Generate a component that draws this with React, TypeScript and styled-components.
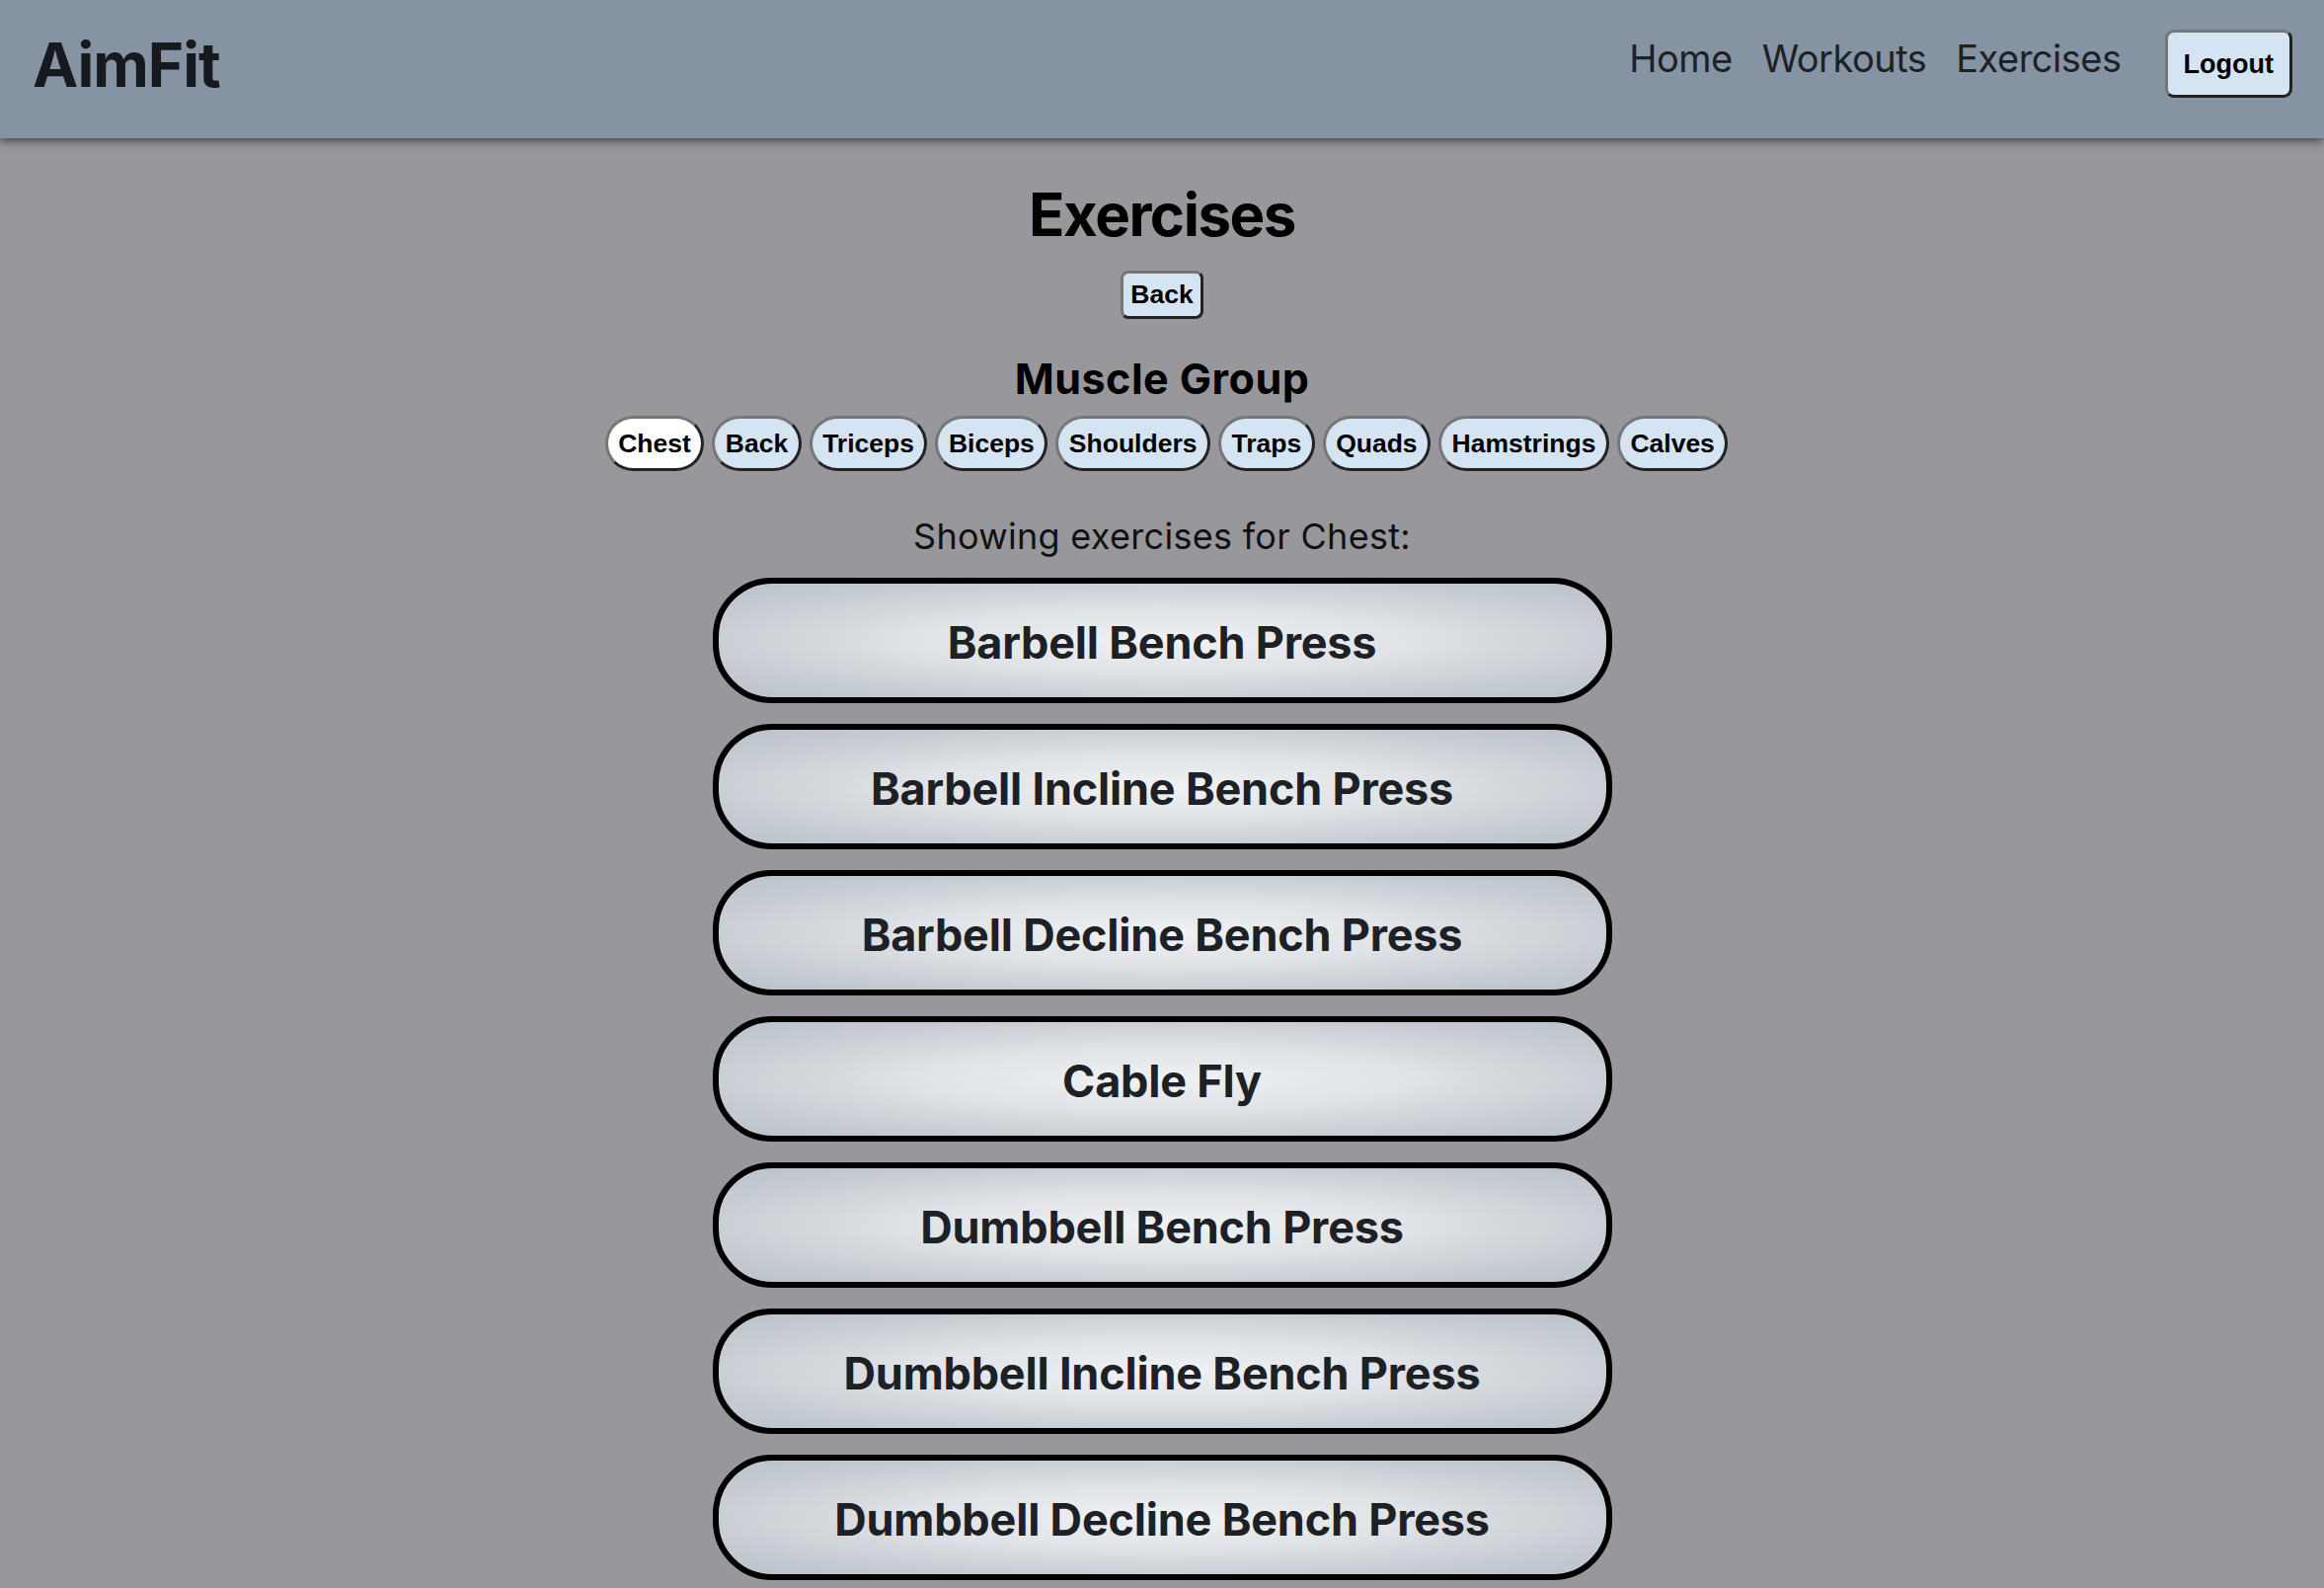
import React, { useState } from "react";
import styled, { createGlobalStyle } from "styled-components";

const GlobalStyle = createGlobalStyle`
  html, body {
    margin: 0;
    padding: 0;
    overflow: hidden;
  }
  body {
    background: #98979c;
    font-family: Inter, "Noto Sans", "Liberation Sans", sans-serif;
    color: #000;
  }
  * { box-sizing: border-box; }
`;

const Page = styled.div`
  min-height: 1608px;
  background: #98979c;
`;

const Header = styled.header`
  position: relative;
  z-index: 2;
  height: 140px;
  background: #8593a3;
  box-shadow: 0 3px 9px rgba(0, 0, 0, 0.55);
  display: flex;
  align-items: center;
  justify-content: space-between;
  padding: 0 32px 0 33px;
`;

const Brand = styled.div`
  font-family: Inter, sans-serif;
  font-weight: 700;
  font-size: 62px;
  line-height: 1.2;
  letter-spacing: -1px;
  color: #16191d;
  margin-bottom: 7px;
`;

const NavRight = styled.nav`
  display: flex;
  align-items: center;
`;

const NavLinks = styled.div`
  display: flex;
  gap: 30px;
  margin-bottom: 21px;
`;

const NavLink = styled.a`
  font-family: Inter, sans-serif;
  font-weight: 400;
  font-size: 38px;
  line-height: 1.5;
  letter-spacing: -0.5px;
  color: #1d2125;
  text-decoration: none;
  cursor: pointer;
`;

const BaseButton = styled.button`
  font-family: "Liberation Sans", Arial, sans-serif;
  font-weight: 700;
  color: #000;
  background: #d5e4f3;
  border-width: 3px;
  border-style: solid;
  border-color: #767676 #222 #222 #767676;
  cursor: pointer;
`;

const LogoutButton = styled(BaseButton)`
  margin-left: 44px;
  margin-bottom: 11px;
  font-size: 27px;
  line-height: 40px;
  padding: 11.5px 16px;
  border-radius: 9px;
`;

const Main = styled.main`
  display: flex;
  flex-direction: column;
  align-items: center;
`;

const Title = styled.h1`
  margin: 41px 0 21px;
  font-family: Inter, sans-serif;
  font-weight: 700;
  font-size: 60px;
  line-height: 1.2;
  letter-spacing: -1.5px;
  color: #000;
`;

const BackButton = styled(BaseButton)`
  font-size: 26.5px;
  line-height: 37px;
  padding: 3px 7.5px;
  border-radius: 8px;
`;

const SubTitle = styled.h3`
  margin: 35px 0 11px;
  font-family: Inter, sans-serif;
  font-weight: 700;
  font-size: 43px;
  line-height: 1.2;
  letter-spacing: 0.5px;
  color: #000;
`;

const PillRow = styled.div`
  display: flex;
  gap: 8px;
  padding-left: 9px;
`;

const Pill = styled(BaseButton)<{ $active: boolean }>`
  font-size: 26.5px;
  line-height: 38px;
  padding: 6px 10.5px;
  border-radius: 999px;
  background: ${(p) => (p.$active ? "#ffffff" : "#d5e4f3")};
`;

const Showing = styled.p`
  margin: 39px 0 15px;
  font-family: Inter, sans-serif;
  font-weight: 400;
  font-size: 36px;
  line-height: 1.5;
  letter-spacing: 0.3px;
  color: #111;
`;

const CardList = styled.div`
  display: flex;
  flex-direction: column;
  gap: 21px;
`;

const Card = styled.button`
  width: 911px;
  height: 127px;
  border: 6px solid #000;
  border-radius: 60px;
  background: radial-gradient(
    ellipse at center,
    #f0f2f4 0%,
    #dfe2e6 40%,
    #c6ccd2 75%,
    #bbc2ca 100%
  );
  display: flex;
  align-items: center;
  justify-content: center;
  font-family: Inter, sans-serif;
  font-weight: 700;
  font-size: 45px;
  letter-spacing: -0.2px;
  color: #1d2024;
  cursor: pointer;
  padding: 5px 0 0;
`;

const groups = [
  "Chest",
  "Back",
  "Triceps",
  "Biceps",
  "Shoulders",
  "Traps",
  "Quads",
  "Hamstrings",
  "Calves",
];

const exercises = [
  "Barbell Bench Press",
  "Barbell Incline Bench Press",
  "Barbell Decline Bench Press",
  "Cable Fly",
  "Dumbbell Bench Press",
  "Dumbbell Incline Bench Press",
  "Dumbbell Decline Bench Press",
];

export default function App() {
  const [group, setGroup] = useState("Chest");
  return (
    <Page>
      <GlobalStyle />
      <Header>
        <Brand>AimFit</Brand>
        <NavRight>
          <NavLinks>
            <NavLink>Home</NavLink>
            <NavLink>Workouts</NavLink>
            <NavLink>Exercises</NavLink>
          </NavLinks>
          <LogoutButton>Logout</LogoutButton>
        </NavRight>
      </Header>
      <Main>
        <Title>Exercises</Title>
        <BackButton>Back</BackButton>
        <SubTitle>Muscle Group</SubTitle>
        <PillRow>
          {groups.map((g) => (
            <Pill key={g} $active={g === group} onClick={() => setGroup(g)}>
              {g}
            </Pill>
          ))}
        </PillRow>
        <Showing>Showing exercises for {group}:</Showing>
        <CardList>
          {exercises.map((e) => (
            <Card key={e}>{e}</Card>
          ))}
        </CardList>
      </Main>
    </Page>
  );
}
